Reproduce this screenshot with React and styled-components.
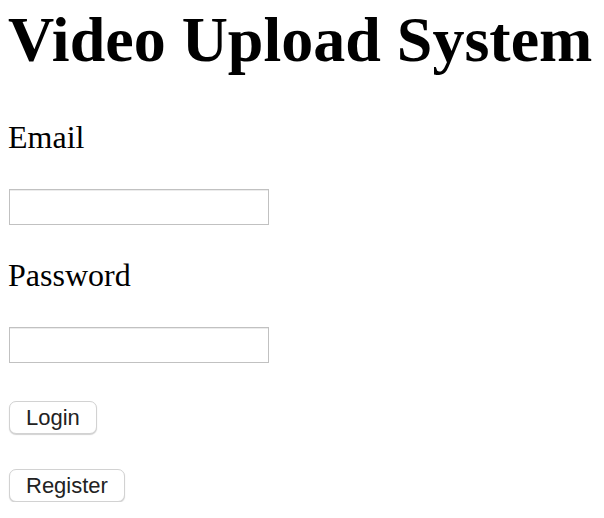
import React from 'react';
import styled, { createGlobalStyle } from 'styled-components';

const GlobalStyle = createGlobalStyle`
  body {
    margin: 0;
    background: #fff;
    color: #000;
    font-family: "Liberation Serif", "Times New Roman", serif;
  }
`;

const Page = styled.div`
  display: flex;
  flex-direction: column;
  align-items: flex-start;
  padding: 5px 8px 0;
`;

const Title = styled.h1`
  margin: 0 0 44px;
  font-size: 64px;
  line-height: 70px;
  font-weight: bold;
  white-space: nowrap;
`;

const Field = styled.div`
  display: flex;
  flex-direction: column;
  align-items: flex-start;
  margin-bottom: 32px;
`;

const Label = styled.label`
  font-size: 32px;
  line-height: 36px;
  margin-bottom: 34px;
`;

const Input = styled.input`
  box-sizing: border-box;
  width: 260px;
  height: 36px;
  margin: 0 0 0 1px;
  padding: 2px 6px;
  border: 1px solid #c1c1c1;
  box-shadow: inset 0 1px 0 #ececec;
  background: #fff;
  font-size: 20px;
  outline: none;
`;

const Button = styled.button`
  box-sizing: border-box;
  height: 33px;
  margin: ${(p) => (p.$last ? '0 0 0 1px' : '6px 0 35px 1px')};
  padding: 0 16px;
  border: 1px solid #d2d2d2;
  border-radius: 7px;
  background: #fff;
  box-shadow: 0 1px 1px rgba(0, 0, 0, 0.18);
  color: #222;
  font-family: "Liberation Sans", Arial, sans-serif;
  font-size: 22px;
  line-height: 31px;
  cursor: pointer;
`;

const App = () => (
  <>
    <GlobalStyle />
    <Page>
      <Title>Video Upload System</Title>
      <Field>
        <Label htmlFor="email">Email</Label>
        <Input id="email" type="email" />
      </Field>
      <Field>
        <Label htmlFor="password">Password</Label>
        <Input id="password" type="password" />
      </Field>
      <Button>Login</Button>
      <Button $last>Register</Button>
    </Page>
  </>
);

export default App;
